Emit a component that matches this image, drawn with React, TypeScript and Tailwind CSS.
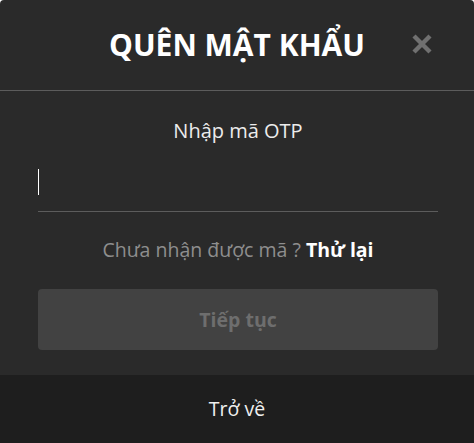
import React from "react";

export default function App() {
  return (
    <div className="w-[474px] h-[443px] bg-[#2a2a2a] rounded-t-[4px] flex flex-col text-white overflow-hidden" style={{ fontFamily: '"Open Sans", "Noto Sans", sans-serif' }}>
      <div className="relative h-[91px] flex items-center justify-center border-b border-[#5c5c5c] shrink-0">
        <h1 className="text-[30px] font-bold leading-none pb-[1px]">QUÊN MẬT KHẨU</h1>
        <button className="absolute left-[410px] top-[32px] w-[23px] h-[23px] flex items-center justify-center">
          <svg width="22" height="22" viewBox="0 0 22 22">
            <path d="M3 3 L19 19 M19 3 L3 19" stroke="#707070" strokeWidth="4.4" strokeLinecap="butt" />
          </svg>
        </button>
      </div>
      <div className="flex-1 flex flex-col pl-[38px] pr-[36px]">
        <div className="text-center text-[20px] text-[#ececec] mt-[26px] leading-[28px]">Nhập mã OTP</div>
        <div className="mt-[20px] h-[47px] border-b border-[#5c5c5c] flex items-start pt-[4px]">
          <div className="w-px h-[26px] bg-white" />
        </div>
        <div className="text-center text-[19.5px] mt-[24px] leading-[28px] text-[#8e8e8e]">
          Chưa nhận được mã ? <span className="font-bold text-white">Thử lại</span>
        </div>
        <button className="mt-[25px] h-[61px] w-full rounded-[4px] bg-[#424242] text-[#6e6e6e] text-[19.5px] font-bold">Tiếp tục</button>
      </div>
      <div className="h-[68px] bg-[#1e1e1e] flex items-center justify-center text-[19.5px] text-[#f0f0f0] shrink-0">Trở về</div>
    </div>
  );
}
